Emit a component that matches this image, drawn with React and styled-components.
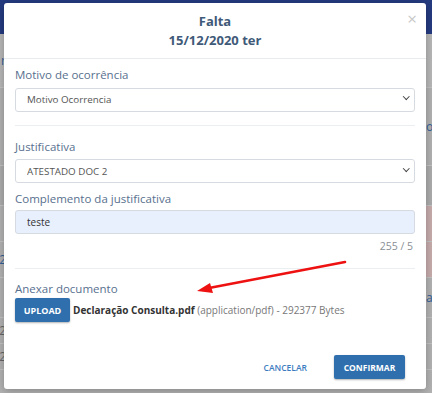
import React from "react";
import styled, { createGlobalStyle } from "styled-components";

const GlobalStyle = createGlobalStyle`
  html, body {
    margin: 0;
    padding: 0;
    width: 432px;
    height: 393px;
    overflow: hidden;
    font-family: "Open Sans", "Liberation Sans", sans-serif;
  }
`;

const backRows = [
  { h: 54, left: "r", right: "", leftColor: "#3a6fb0", tone: "#d6d6d6" },
  { h: 78, left: "", right: "o", leftColor: "#3a6fb0", tone: "#cfcfcf" },
  { h: 40, left: "", right: "", leftColor: "#3a6fb0", tone: "#c9c9c9" },
  { h: 36, left: "", right: "", leftColor: "#3a6fb0", tone: "#d0d0d0", pink: true },
  { h: 36, left: "2", right: "", leftColor: "#3a6fb0", tone: "#d0d0d0", pink: true },
  { h: 40, left: "", right: "a", leftColor: "#777", tone: "#d0d0d0" },
  { h: 26, left: "2", right: "", leftColor: "#777", tone: "#d0d0d0" },
  { h: 26, left: "2", right: "", leftColor: "#777", tone: "#d0d0d0" },
  { h: 30, left: "", right: "", leftColor: "#777", tone: "#d0d0d0" },
];

const App = () => {
  return (
    <>
      <GlobalStyle />
      <Page>
        <Backdrop>
          <TopBar />
          {backRows.map((r, i) => (
            <BackRow key={i} tone={r.tone} style={{ height: r.h }}>
              <BackCell color={r.leftColor}>{r.left}</BackCell>
              <BackCell color="#3a6fb0" right pink={r.pink}>
                {r.right}
              </BackCell>
            </BackRow>
          ))}
        </Backdrop>
        <Shade />

        <Modal>
          <ModalHeader>
            <Title>Falta</Title>
            <Title>15/12/2020 ter</Title>
            <Close>×</Close>
          </ModalHeader>

          <ModalBody>
            <Field>
              <Label>Motivo de ocorrência</Label>
              <SelectWrap>
                <Select defaultValue="motivo">
                  <option value="motivo">Motivo Ocorrencia</option>
                </Select>
                <Chevron />
              </SelectWrap>
            </Field>

            <Divider />

            <Field gap={8}>
              <Label>Justificativa</Label>
              <SelectWrap>
                <Select defaultValue="atestado">
                  <option value="atestado">ATESTADO DOC 2</option>
                </Select>
                <Chevron />
              </SelectWrap>
            </Field>

            <Field>
              <Label>Complemento da justificativa</Label>
              <Input defaultValue="teste" />
              <Counter>255 / 5</Counter>
            </Field>

            <Divider top={14} bottom={12} />

            <Field>
              <Label tight>Anexar documento</Label>
              <UploadRow>
                <UploadButton>UPLOAD</UploadButton>
                <FileName>
                  <strong>Declaração Consulta.pdf</strong>
                  <FileMeta> (application/pdf) - 292377 Bytes</FileMeta>
                </FileName>
              </UploadRow>
            </Field>
          </ModalBody>

          <ModalFooter>
            <TextButton>CANCELAR</TextButton>
            <PrimaryButton>CONFIRMAR</PrimaryButton>
          </ModalFooter>

          <Arrow viewBox="0 0 160 40" width="160" height="40">
            <line x1="152" y1="3" x2="16" y2="29" stroke="#ee1111" strokeWidth="2.6" strokeLinecap="round" />
            <polygon points="4,32 17,24 20,34" fill="#ee1111" />
          </Arrow>
        </Modal>
      </Page>
    </>
  );
};

export default App;

const Page = styled.div`
  position: relative;
  width: 432px;
  height: 393px;
  overflow: hidden;
  background: #d4d4d4;
`;

const Backdrop = styled.div`
  display: flex;
  flex-direction: column;
`;

const TopBar = styled.div`
  height: 34px;
  background: #2c4596;
`;

const BackRow = styled.div`
  display: flex;
  justify-content: space-between;
  background: ${(p) => p.tone};
  border-bottom: 1px solid #e2e2e2;
  box-sizing: border-box;
`;

const BackCell = styled.div`
  width: 6px;
  display: flex;
  align-items: center;
  justify-content: ${(p) => (p.right ? "flex-start" : "flex-end")};
  font-size: 12px;
  color: ${(p) => p.color};
  background: ${(p) => (p.pink ? "#e8c9c9" : "transparent")};
  overflow: hidden;
`;

const Shade = styled.div`
  position: absolute;
  inset: 0;
  background: rgba(0, 0, 0, 0.14);
`;

const Modal = styled.div`
  position: absolute;
  left: 4px;
  top: 3px;
  width: 422px;
  height: 386px;
  background: #fff;
  border-radius: 3px;
  box-shadow: 0 2px 8px rgba(0, 0, 0, 0.25);
  display: flex;
  flex-direction: column;
`;

const ModalHeader = styled.div`
  position: relative;
  height: 56px;
  border-bottom: 1px solid #e9ecef;
  display: flex;
  flex-direction: column;
  align-items: center;
  justify-content: center;
  box-sizing: border-box;
  padding-top: 1px;
`;

const Title = styled.div`
  color: #3f5a78;
  font-size: 13px;
  font-weight: 700;
  line-height: 19px;
`;

const Close = styled.span`
  position: absolute;
  right: 9px;
  top: 4px;
  font-size: 17px;
  color: #c8c8c8;
`;

const ModalBody = styled.div`
  padding: 8px 11px 0;
  display: flex;
  flex-direction: column;
`;

const Field = styled.div`
  display: flex;
  flex-direction: column;
  margin-bottom: ${(p) => p.gap || 0}px;
`;

const Label = styled.label`
  color: #58708e;
  font-size: 11.5px;
  line-height: 16px;
  margin-bottom: ${(p) => (p.tight ? 1 : 3)}px;
`;

const SelectWrap = styled.div`
  position: relative;
`;

const Select = styled.select`
  appearance: none;
  width: 100%;
  height: 24px;
  box-sizing: border-box;
  border: 1px solid #d6dbe1;
  border-radius: 3px;
  background: #fff;
  padding: 0 11px;
  font-family: "Open Sans", "Liberation Sans", sans-serif;
  font-size: 9.8px;
  color: #555;
  outline: none;
`;

const Chevron = styled.span`
  position: absolute;
  right: 7px;
  top: 8px;
  width: 3.5px;
  height: 3.5px;
  border-right: 1.5px solid #444;
  border-bottom: 1.5px solid #444;
  transform: rotate(45deg);
  pointer-events: none;
`;

const Divider = styled.hr`
  border: 0;
  border-top: 1px solid #eceff2;
  margin: ${(p) => p.top || 13}px 0 ${(p) => p.bottom || 13}px;
  width: 100%;
`;

const Input = styled.input`
  height: 24px;
  box-sizing: border-box;
  border: 1px solid #d6dbe1;
  border-radius: 3px;
  background: #e8f0fe;
  padding: 0 11px;
  font-family: "Open Sans", "Liberation Sans", sans-serif;
  font-size: 10px;
  color: #333;
  outline: none;
  margin-bottom: 4px;
`;

const Counter = styled.div`
  align-self: flex-end;
  margin-right: 2px;
  font-size: 10.5px;
  color: #8a8f95;
  line-height: 16px;
`;

const UploadRow = styled.div`
  display: flex;
  align-items: center;
  gap: 3px;
`;

const UploadButton = styled.button`
  width: 55px;
  height: 24px;
  border: none;
  border-radius: 2px;
  background: #2f6fae;
  color: #fff;
  font-family: "Open Sans", "Liberation Sans", sans-serif;
  font-size: 9px;
  font-weight: 700;
  box-shadow: 0 1px 2px rgba(0, 0, 0, 0.3);
  padding: 0;
`;

const FileName = styled.span`
  font-size: 10px;
  color: #333;
  strong {
    font-weight: 700;
  }
`;

const FileMeta = styled.span`
  color: #777;
`;

const ModalFooter = styled.div`
  margin-top: auto;
  display: flex;
  justify-content: flex-end;
  align-items: center;
  gap: 27px;
  padding: 0 21px 10px 0;
`;

const TextButton = styled.button`
  border: none;
  background: none;
  color: #3b7cbf;
  font-family: "Open Sans", "Liberation Sans", sans-serif;
  font-size: 8.5px;
  font-weight: 600;
  padding: 0;
`;

const PrimaryButton = styled.button`
  width: 71px;
  height: 24px;
  border: none;
  border-radius: 2px;
  background: #2f6fae;
  color: #fff;
  font-family: "Open Sans", "Liberation Sans", sans-serif;
  font-size: 8.5px;
  font-weight: 700;
  box-shadow: 0 1px 2px rgba(0, 0, 0, 0.3);
  padding: 0;
`;

const Arrow = styled.svg`
  position: absolute;
  left: 189px;
  top: 256px;
  overflow: visible;
`;
